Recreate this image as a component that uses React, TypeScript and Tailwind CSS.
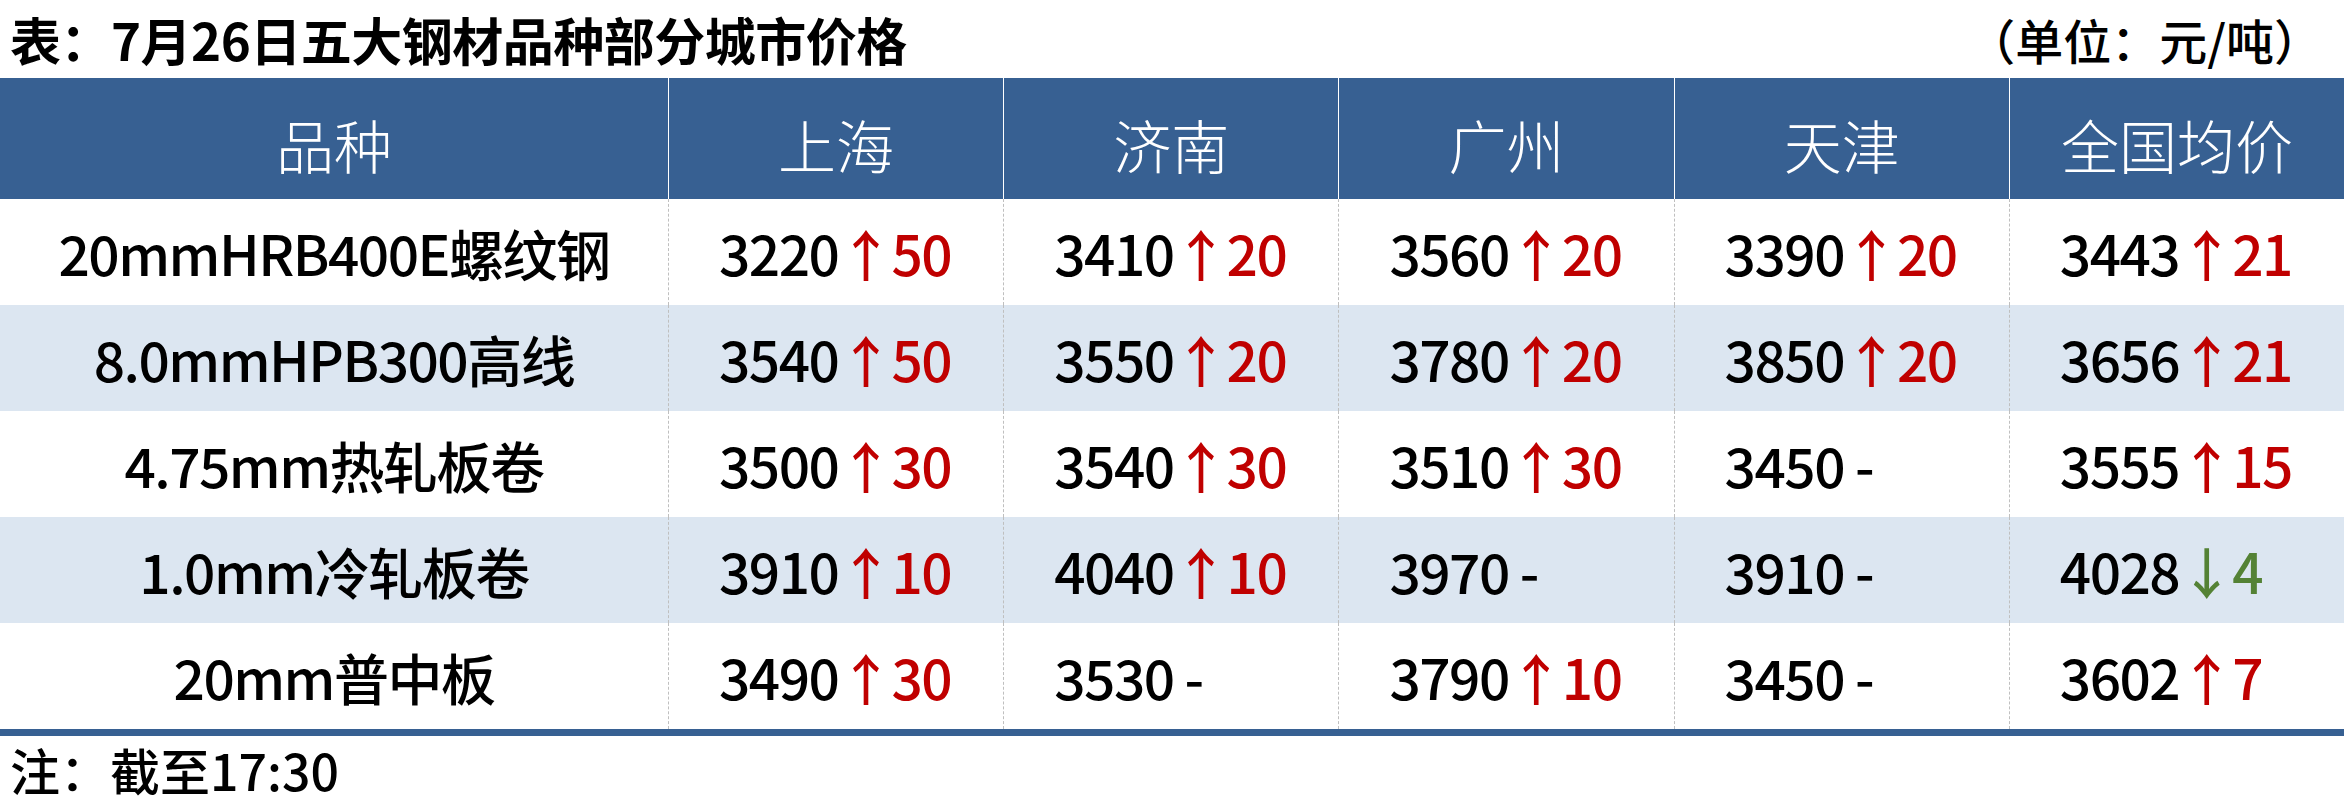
import React from "react";

type Cell = { v: number; dir?: "up" | "down"; d?: number };

const rows: { name: string; cells: Cell[] }[] = [
  {
    name: "20mmHRB400E螺纹钢",
    cells: [
      { v: 3220, dir: "up", d: 50 },
      { v: 3410, dir: "up", d: 20 },
      { v: 3560, dir: "up", d: 20 },
      { v: 3390, dir: "up", d: 20 },
      { v: 3443, dir: "up", d: 21 },
    ],
  },
  {
    name: "8.0mmHPB300高线",
    cells: [
      { v: 3540, dir: "up", d: 50 },
      { v: 3550, dir: "up", d: 20 },
      { v: 3780, dir: "up", d: 20 },
      { v: 3850, dir: "up", d: 20 },
      { v: 3656, dir: "up", d: 21 },
    ],
  },
  {
    name: "4.75mm热轧板卷",
    cells: [
      { v: 3500, dir: "up", d: 30 },
      { v: 3540, dir: "up", d: 30 },
      { v: 3510, dir: "up", d: 30 },
      { v: 3450 },
      { v: 3555, dir: "up", d: 15 },
    ],
  },
  {
    name: "1.0mm冷轧板卷",
    cells: [
      { v: 3910, dir: "up", d: 10 },
      { v: 4040, dir: "up", d: 10 },
      { v: 3970 },
      { v: 3910 },
      { v: 4028, dir: "down", d: 4 },
    ],
  },
  {
    name: "20mm普中板",
    cells: [
      { v: 3490, dir: "up", d: 30 },
      { v: 3530 },
      { v: 3790, dir: "up", d: 10 },
      { v: 3450 },
      { v: 3602, dir: "up", d: 7 },
    ],
  },
];

const headers = ["品种", "上海", "济南", "广州", "天津", "全国均价"];

function Value({ c }: { c: Cell }) {
  if (!c.dir) {
    return <span>{c.v} -</span>;
  }
  const color = c.dir === "up" ? "text-[#c00000]" : "text-[#548235]";
  return (
    <span>
      {c.v}
      <span className={color}>
        <span className="tracking-[-6px]">{c.dir === "up" ? "↑" : "↓"}</span>
        <span className="pl-[4px]">{c.d}</span>
      </span>
    </span>
  );
}

export default function App() {
  return (
    <div className="w-[2344px] h-[809px] bg-white text-black font-['Noto_Sans_CJK_SC',sans-serif] overflow-hidden">
      <div className="h-[78px] flex items-center justify-between pl-[10px] pr-[22px]">
        <div className="text-[51px] font-bold leading-none tracking-[-0.5px]">表：7月26日五大钢材品种部分城市价格</div>
        <div className="text-[48px] font-medium leading-none">（单位：元/吨）</div>
      </div>
      <div className="grid grid-cols-[668px_repeat(5,1fr)] h-[121px] bg-[#376092] text-white">
        {headers.map((h, i) => (
          <div
            key={h}
            className={`flex items-center justify-center pt-[10px] text-[58px] font-light leading-none ${
              i > 0 ? "border-l border-white" : ""
            }`}
          >
            {h}
          </div>
        ))}
      </div>
      {rows.map((r, ri) => (
        <div
          key={r.name}
          className={`grid grid-cols-[668px_repeat(5,1fr)] h-[106px] text-[55px] font-medium leading-none tracking-[-1.5px] ${
            ri % 2 === 1 ? "bg-[#dce6f1]" : "bg-white"
          }`}
        >
          <div className="flex items-center justify-center">{r.name}</div>
          {r.cells.map((c, ci) => (
            <div
              key={ci}
              className="flex items-center pl-[50px] border-l border-dashed border-[#bfbfbf]"
            >
              <Value c={c} />
            </div>
          ))}
        </div>
      ))}
      <div className="h-[7px] bg-[#376092]" />
      <div className="pl-[10px] pt-[8px] text-[50px] font-medium leading-none">注：截至17:30</div>
    </div>
  );
}
